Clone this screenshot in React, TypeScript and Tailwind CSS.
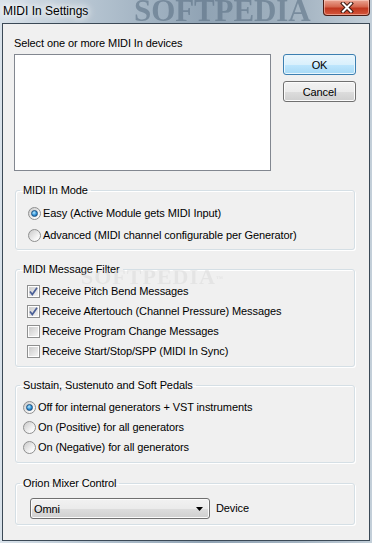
import React from 'react'

function Radio({ checked }: { checked?: boolean }) {
  return (
    <span className="flex h-[13px] w-[13px] shrink-0 items-center justify-center rounded-full border border-[#8e8f8f] bg-[linear-gradient(135deg,#c9c9c9,#f6f6f6_70%,#ffffff)]">
      {checked && (
        <span className="h-[7px] w-[7px] rounded-full border border-[#1c5180] bg-[radial-gradient(circle_at_40%_35%,#b9ecff,#2d8fd6_55%,#0f4f8c)]" />
      )}
    </span>
  )
}

function Check({ checked }: { checked?: boolean }) {
  return (
    <span className="relative flex h-[13px] w-[13px] shrink-0 items-center justify-center border border-[#8e8f8f] bg-white">
      <span className="h-[9px] w-[9px] bg-[linear-gradient(135deg,#cbcbcb,#f4f4f4)]" />
      {checked && (
        <svg className="absolute left-[1px] top-[1px]" width="9" height="9" viewBox="0 0 9 9">
          <path d="M1 4.5 L3.3 7.5 L8 0.8" fill="none" stroke="#4a5f97" strokeWidth="1.7" />
        </svg>
      )}
    </span>
  )
}

function Group({
  title,
  className,
  children,
}: {
  title: string
  className: string
  children: React.ReactNode
}) {
  return (
    <fieldset className="ml-[1px] w-[340px] rounded-[3px] border border-[#d5dfe5] shadow-[inset_1px_1px_0_#fff,1px_1px_0_#fff]">
      <legend className="ml-[4px] px-[3px] leading-[16px]">{title}</legend>
      <div className={className}>{children}</div>
    </fieldset>
  )
}

export default function App() {
  return (
    <div className="relative h-[543px] w-[372px] overflow-hidden bg-[linear-gradient(90deg,#d9e2ea_0%,#b4c3d0_25%,#90a3b4_55%,#a3b3c1_80%,#c3cfd9_100%)] font-['Liberation_Sans',Arial,sans-serif] text-[11px] tracking-[-0.1px] text-black">
      {/* title bar */}
      <div className="relative h-[23px]">
        <span className="absolute left-[134px] top-[-7px] font-['Liberation_Serif',serif] text-[31px] font-bold leading-[36px] text-[#5d7286] opacity-60 blur-[0.6px]">
          SOFTPEDIA
        </span>
        <span className="absolute left-[3px] top-[3px] text-[12px] leading-[16px] tracking-normal [text-shadow:0_0_6px_#fff,0_0_10px_#fff,0_0_12px_#fff]">
          MIDI In Settings
        </span>
        <div className="absolute left-[323px] top-0 flex h-[16px] w-[47px] items-center justify-center rounded-b-[4px] border border-t-0 border-[#4b1c14] bg-[linear-gradient(180deg,#eaa593_0%,#d5674f_45%,#c0371f_55%,#d4563c_100%)] shadow-[inset_0_0_0_1px_rgba(255,220,210,0.5)]">
          <svg width="14" height="11" viewBox="0 0 14 11">
            <path d="M3 1.5 L11 9.5 M11 1.5 L3 9.5" stroke="#3d1a12" strokeWidth="4" strokeLinecap="square" />
            <path d="M3 1.5 L11 9.5 M11 1.5 L3 9.5" stroke="#fff" strokeWidth="2" strokeLinecap="square" />
          </svg>
        </div>
      </div>

      {/* client area */}
      <div className="relative ml-[2px] h-[518px] w-[368px] border border-[#3b4956] bg-[#f0f0f0] pl-[11px] pt-[11px]">
        <span className="pointer-events-none absolute left-[78px] top-[236px] font-['Liberation_Serif',serif] text-[22px] font-bold tracking-[1px] text-[#d4d4d4] opacity-40">
          SOFTPEDIA<sup className="text-[7px]">™</sup>
        </span>

        <div className="relative leading-[16px]">Select one or more MIDI In devices</div>
        <div className="mt-[3px] flex gap-[12px]">
          <div className="h-[117px] w-[257px] border border-[#828790] bg-white" />
          <div className="flex flex-col gap-[6px]">
            <button className="h-[21px] w-[73px] rounded-[3px] border border-[#3c7fb1] bg-[linear-gradient(180deg,#eaf6fd_0%,#d9f0fc_50%,#bee6fd_51%,#a7d9f5_100%)] leading-[16px] shadow-[inset_0_0_0_1px_#e8f6fd]">
              OK
            </button>
            <button className="h-[21px] w-[73px] rounded-[3px] border border-[#707070] bg-[linear-gradient(180deg,#f2f2f2_0%,#ebebeb_50%,#dddddd_51%,#cfcfcf_100%)] leading-[16px] shadow-[inset_0_0_0_1px_#fbfbfb]">
              Cancel
            </button>
          </div>
        </div>

        <div className="mt-[11px]">
          <Group title="MIDI In Mode" className="pb-[3px] pl-[12px] pt-[4px]">
            <div className="flex h-[22px] items-center gap-[2px]">
              <Radio checked />
              <span>Easy (Active Module gets MIDI Input)</span>
            </div>
            <div className="flex h-[22px] items-center gap-[2px]">
              <Radio />
              <span>Advanced (MIDI channel configurable per Generator)</span>
            </div>
          </Group>
        </div>

        <div className="mt-[11px]">
          <Group title="MIDI Message Filter" className="pb-[5px] pl-[11px] pt-[4px]">
            <div className="flex h-[20px] items-center gap-[2px]">
              <Check checked />
              <span>Receive Pitch Bend Messages</span>
            </div>
            <div className="flex h-[20px] items-center gap-[2px]">
              <Check checked />
              <span>Receive Aftertouch (Channel Pressure) Messages</span>
            </div>
            <div className="flex h-[20px] items-center gap-[2px]">
              <Check />
              <span>Receive Program Change Messages</span>
            </div>
            <div className="flex h-[20px] items-center gap-[2px]">
              <Check />
              <span>Receive Start/Stop/SPP (MIDI In Sync)</span>
            </div>
          </Group>
        </div>

        <div className="mt-[10px]">
          <Group title="Sustain, Sustenuto and Soft Pedals" className="pb-[5px] pl-[7px] pt-[4px]">
            <div className="flex h-[20px] items-center gap-[2px]">
              <Radio checked />
              <span>Off for internal generators + VST instruments</span>
            </div>
            <div className="flex h-[20px] items-center gap-[2px]">
              <Radio />
              <span>On (Positive) for all generators</span>
            </div>
            <div className="flex h-[20px] items-center gap-[2px]">
              <Radio />
              <span>On (Negative) for all generators</span>
            </div>
          </Group>
        </div>

        <div className="mt-[12px]">
          <Group title="Orion Mixer Control" className="pb-[5px] pl-[14px] pt-[7px]">
            <div className="flex items-center gap-[6px]">
              <div className="flex h-[21px] w-[180px] items-center justify-between rounded-[3px] border border-[#707070] bg-[linear-gradient(180deg,#f2f2f2_0%,#ebebeb_50%,#dddddd_51%,#cfcfcf_100%)] pl-[3px] pr-[6px] shadow-[inset_0_0_0_1px_#fbfbfb]">
                <span className="leading-[16px]">Omni</span>
                <svg width="7" height="4" viewBox="0 0 7 4">
                  <path d="M0 0 H7 L3.5 4 Z" fill="#000" />
                </svg>
              </div>
              <span>Device</span>
            </div>
          </Group>
        </div>
      </div>
    </div>
  )
}
